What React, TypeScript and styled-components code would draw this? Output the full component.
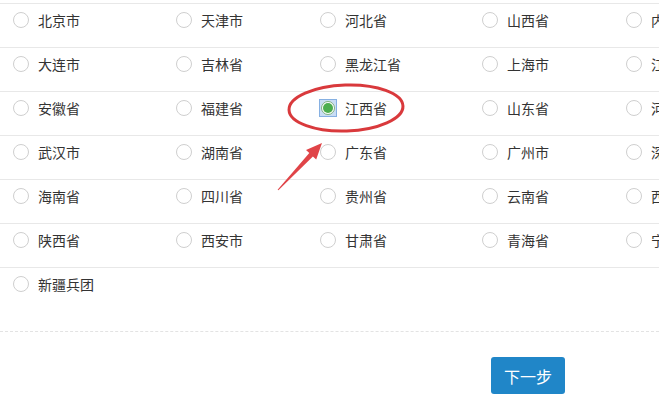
import styled, { createGlobalStyle } from "styled-components";

const GlobalStyle = createGlobalStyle`
  html, body {
    margin: 0;
    padding: 0;
    background: #ffffff;
  }
  body {
    font-family: "Noto Sans CJK SC", "Noto Sans", sans-serif;
    color: #333333;
  }
`;

const Page = styled.div`
  position: relative;
  width: 100%;
  height: 408px;
  overflow: hidden;
  padding-top: 3px;
  box-sizing: border-box;
`;

const Row = styled.div`
  display: flex;
  height: 44px;
  box-sizing: border-box;
  border-top: 1px solid #e8e8e8;
  padding: 6px 0 0 13px;
`;

const Cell = styled.label<{ $w: number }>`
  flex: 0 0 ${(p) => p.$w}px;
  display: flex;
  align-items: center;
  height: 20px;
  gap: 9px;
  font-size: 14px;
  line-height: 20px;
  color: #333333;
  white-space: nowrap;
`;

const Radio = styled.span`
  width: 16px;
  height: 16px;
  box-sizing: border-box;
  border: 1px solid #cfcfcf;
  border-radius: 50%;
  background: #ffffff;
  flex-shrink: 0;
`;

const FocusBox = styled.span`
  width: 18px;
  height: 18px;
  margin: 0 -1px 0 -1px;
  box-sizing: border-box;
  background: #c9ddf4;
  border: 1px solid #86b0e2;
  display: flex;
  align-items: center;
  justify-content: center;
  flex-shrink: 0;
`;

const CheckedRadio = styled.span`
  width: 14px;
  height: 14px;
  box-sizing: border-box;
  border: 1px solid #7fb07f;
  border-radius: 50%;
  background: #ffffff;
  display: flex;
  align-items: center;
  justify-content: center;

  &::after {
    content: "";
    width: 10px;
    height: 10px;
    border-radius: 50%;
    background: #4cae4f;
  }
`;

const Divider = styled.div`
  margin-top: 20px;
  border-top: 1px dashed #e3e3e3;
`;

const Footer = styled.div`
  display: flex;
  padding: 25px 0 0 491px;
`;

const NextButton = styled.button`
  width: 74px;
  height: 37px;
  border: none;
  border-radius: 3px;
  background: #2086c8;
  color: #ffffff;
  font-family: "Noto Sans CJK SC", "Noto Sans", sans-serif;
  font-size: 16px;
  cursor: pointer;
`;

const Annotation = styled.svg`
  position: absolute;
  left: 0;
  top: 0;
  width: 659px;
  height: 408px;
  pointer-events: none;
`;

const widths = [163, 144, 162, 144, 144, 144];

const rows: string[][] = [
  ["北京市", "天津市", "河北省", "山西省", "内蒙古", "辽宁省"],
  ["大连市", "吉林省", "黑龙江省", "上海市", "江苏省", "浙江省"],
  ["安徽省", "福建省", "江西省", "山东省", "河南省", "湖北省"],
  ["武汉市", "湖南省", "广东省", "广州市", "深圳市", "广西"],
  ["海南省", "四川省", "贵州省", "云南省", "西藏", "重庆市"],
  ["陕西省", "西安市", "甘肃省", "青海省", "宁夏", "新疆"],
  ["新疆兵团"],
];

const selected = "江西省";

export default function App() {
  return (
    <>
      <GlobalStyle />
      <Page>
        {rows.map((row, i) => (
          <Row key={i}>
            {row.map((name, j) => (
              <Cell key={name} $w={widths[j]}>
                {name === selected ? (
                  <FocusBox>
                    <CheckedRadio />
                  </FocusBox>
                ) : (
                  <Radio />
                )}
                {name}
              </Cell>
            ))}
          </Row>
        ))}
        <Divider />
        <Footer>
          <NextButton>下一步</NextButton>
        </Footer>
        <Annotation viewBox="0 0 659 408">
          <ellipse
            cx="346"
            cy="108"
            rx="57"
            ry="23"
            fill="none"
            stroke="#d9393c"
            strokeWidth="3"
            transform="rotate(-2 346 108)"
          />
          <polygon
            points="278.4,190.3 312.9,156.4 316.2,159.5 322,143 306,149.9 309.3,153 277.6,189.7"
            fill="#e04448"
          />
        </Annotation>
      </Page>
    </>
  );
}
